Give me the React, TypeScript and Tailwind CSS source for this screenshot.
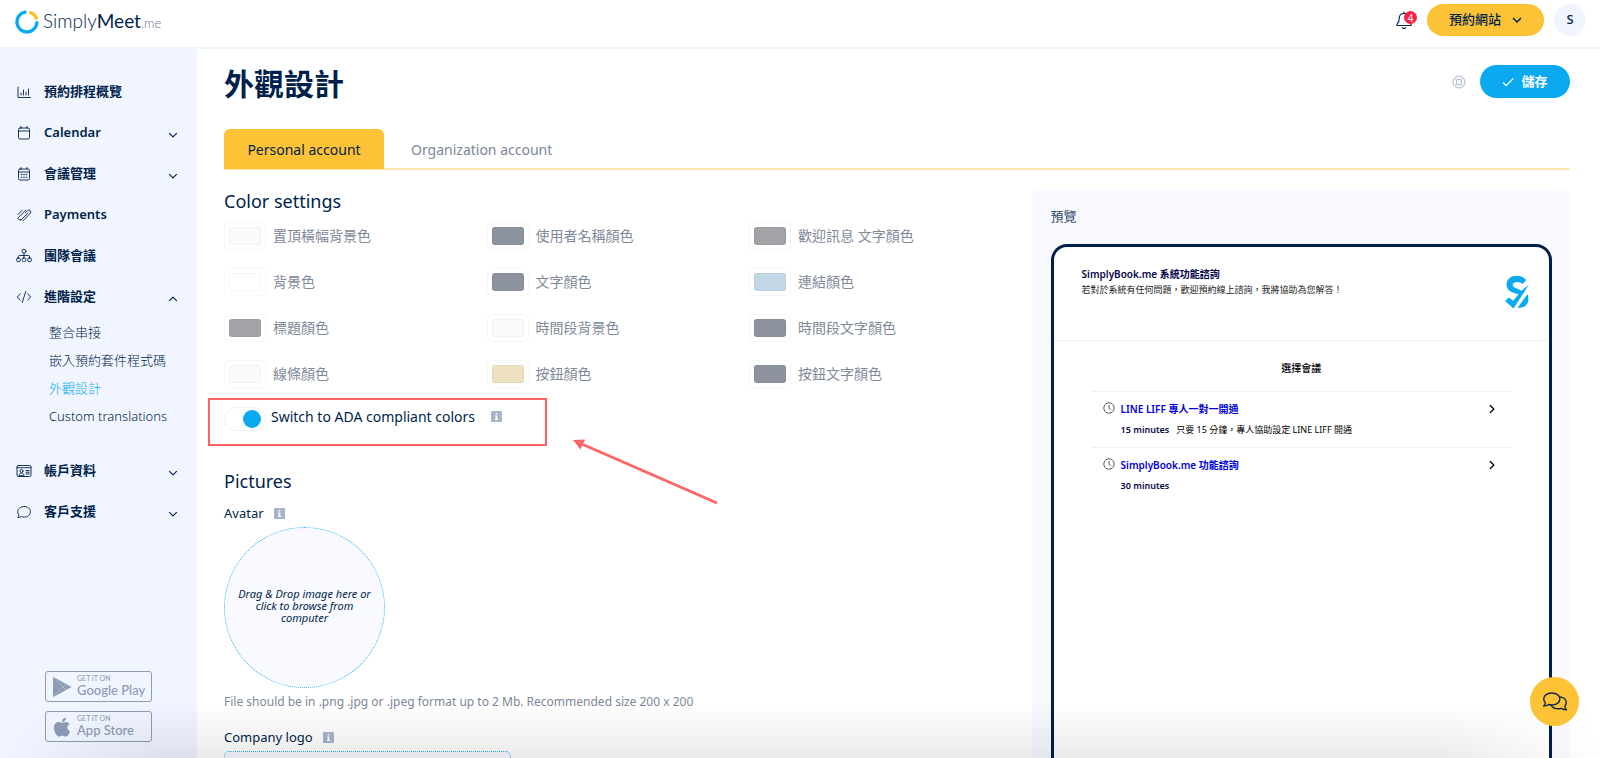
import { useState, type ReactNode } from "react";

type IconName =
  | "chart"
  | "calendar"
  | "calendarDays"
  | "payments"
  | "team"
  | "code"
  | "account"
  | "support";

interface NavItem {
  icon: IconName;
  label: string;
  expandable?: boolean;
  children?: string[];
}

const NAV: NavItem[] = [
  { icon: "chart", label: "預約排程概覽" },
  { icon: "calendar", label: "Calendar", expandable: true },
  { icon: "calendarDays", label: "會議管理", expandable: true },
  { icon: "payments", label: "Payments" },
  { icon: "team", label: "團隊會議" },
  {
    icon: "code",
    label: "進階設定",
    expandable: true,
    children: ["整合串接", "嵌入預約套件程式碼", "外觀設計", "Custom translations"],
  },
  { icon: "account", label: "帳戶資料", expandable: true },
  { icon: "support", label: "客戶支援", expandable: true },
];

const COLORS = [
  { id: "banner-bg", label: "置頂橫幅背景色", value: "#f9fafc" },
  { id: "user-name", label: "使用者名稱顏色", value: "#8c939f" },
  { id: "welcome-text", label: "歡迎訊息 文字顏色", value: "#a2a3a7" },
  { id: "page-bg", label: "背景色", value: "#ffffff" },
  { id: "text", label: "文字顏色", value: "#8c939f" },
  { id: "link", label: "連結顏色", value: "#c1d7e6" },
  { id: "title", label: "標題顏色", value: "#a2a3a7" },
  { id: "slot-bg", label: "時間段背景色", value: "#f9fafc" },
  { id: "slot-text", label: "時間段文字顏色", value: "#8c939f" },
  { id: "line", label: "線條顏色", value: "#f9fafc" },
  { id: "button", label: "按鈕顏色", value: "#eee1c1" },
  { id: "button-text", label: "按鈕文字顏色", value: "#8c939f" },
];

const MEETINGS = [
  {
    name: "LINE LIFF 專人一對一開通",
    duration: "15 minutes",
    note: "只要 15 分鐘，專人協助設定 LINE LIFF 開通",
  },
  { name: "SimplyBook.me 功能諮詢", duration: "30 minutes", note: "" },
];

const ICON_PATHS: Record<IconName, ReactNode> = {
  chart: (
    <>
      <path d="M2 3v10.500h12.500" />
      <path d="M5 11V9M7.500 11V6M10 11V8M12.500 11V5" />
    </>
  ),
  calendar: (
    <>
      <rect x="2.500" y="3" width="11" height="11" rx="1.500" />
      <path d="M2.500 6h11M5 1.500V3M11 1.500V3" />
    </>
  ),
  calendarDays: (
    <>
      <rect x="2.500" y="3" width="11" height="11" rx="1.500" />
      <path d="M2.500 6h11M5 1.500V3M11 1.500V3" />
      <path d="M5.500 8.500h.01M8 8.500h.01M10.500 8.500h.01M5.500 11.200h.01M8 11.200h.01M10.500 11.200h.01" strokeWidth="1.600" />
    </>
  ),
  payments: (
    <path d="M1.800 7.600 6.200 3.200M4.700 13.300 12 5.900M9.900 3 2.600 10.200a1.500 1.500 0 0 0 2.100 2.200M9.300 5.800l2.100-2.100a1.900 1.900 0 0 1 2.800 2.700L6.900 13.800" />
  ),
  team: (
    <>
      <circle cx="8" cy="3.300" r="2" />
      <path d="M8 5.300v4.700M2.300 10V8.800A1.300 1.300 0 0 1 3.600 7.500h8.800a1.300 1.300 0 0 1 1.300 1.300V10" />
      <rect x=".6" y="10" width="3.600" height="3.600" rx="1.200" />
      <rect x="6.200" y="10" width="3.600" height="3.600" rx="1.200" />
      <rect x="11.800" y="10" width="3.600" height="3.600" rx="1.200" />
    </>
  ),
  code: <path d="M4.300 4.800 1.300 8l3 3.200M11.700 4.800l3 3.200-3 3.200M9.700 2.500 6.300 13.500" />,
  account: (
    <>
      <rect x="1" y="2.500" width="14" height="11" rx="1.200" />
      <path d="M1 4.700h14M3 12.300c0-3.100 5-3.100 5 0zM10 7.500h3.200M10 9.200h3.200M10 10.900h3.200" />
      <circle cx="5.500" cy="8" r="1.500" />
    </>
  ),
  support: (
    <path d="M8.200 2.500c3.600 0 6.300 2.400 6.300 5.300s-2.700 5.300-6.300 5.300c-1 0-2-.2-2.900-.6-1 .7-2.200 1-3.600.9.700-.8 1.200-1.600 1.300-2.300C2.100 10.100 1.700 9 1.700 7.800 1.700 4.900 4.600 2.500 8.200 2.500Z" />
  ),
};

function NavIcon({ name }: { name: IconName }) {
  return (
    <svg
      viewBox="0 0 16 16"
      className="size-4 shrink-0"
      fill="none"
      stroke="currentColor"
      strokeWidth=".9"
      strokeLinecap="round"
      strokeLinejoin="round"
    >
      {ICON_PATHS[name]}
    </svg>
  );
}

function Chevron({ className }: { className: string }) {
  return (
    <svg
      viewBox="0 0 10 10"
      className={className}
      fill="none"
      stroke="currentColor"
      strokeWidth="1.200"
      strokeLinecap="round"
      strokeLinejoin="round"
    >
      <path d="m1.500 3.300 3.500 3.500 3.500-3.500" />
    </svg>
  );
}

function InfoIcon() {
  return (
    <svg viewBox="0 0 11 11" className="size-[11px] shrink-0" role="img" aria-label="Info">
      <rect width="11" height="11" rx="1" fill="#a6b5c9" />
      <path d="M4.700 2h1.600v1.500H4.700zM4 4.500h2.300v3.300H7V9H4V7.800h.7V5.600H4z" fill="#fff" />
    </svg>
  );
}

function Header() {
  return (
    <header className="flex h-[49px] shrink-0 items-start justify-between border-b-2 border-[#f1f5ff] bg-white pr-[14px] pl-[15px]">
      <a href="#home" className="flex items-center gap-1 pt-[6px]" aria-label="SimplyMeet.me">
        <svg viewBox="0 0 24 24" className="size-6" fill="none" strokeWidth="3.400" strokeLinecap="round">
          <path d="M21.900 12.800A10 10 0 1 1 10 2.200" stroke="#0baaf0" />
          <path d="M15.600 2.700a10 10 0 0 1 5.800 5.700" stroke="#fdc02f" />
        </svg>
        <span className="font-['Lato'] text-[19px] leading-[30px] font-light text-[#001f4b]">
          Simply<span className="font-normal">Meet</span>
          <span className="text-[13px] text-[#66748c]">.me</span>
        </span>
      </a>

      <div className="flex items-center pt-1">
        <button type="button" aria-label="Notifications" className="relative mr-[13px] size-5">
          <svg
            viewBox="0 0 20 20"
            className="size-5"
            fill="none"
            stroke="#0b2a52"
            strokeWidth="1.200"
            strokeLinecap="round"
            strokeLinejoin="round"
          >
            <path d="M10 2v1.300M10 3.300c-3 0-4.700 2-4.700 4.700 0 3.500-1 4.800-2.300 6.300-.4.600 0 1.200.6 1.200h12.800c.6 0 1-.6.600-1.200C15.700 12.800 14.700 11.500 14.700 8c0-2.700-1.700-4.700-4.700-4.700ZM8.400 17.700c.5 1 2.700 1 3.200 0" />
          </svg>
          <span className="absolute top-px left-[10px] flex size-[13px] items-center justify-center rounded-full bg-[#fb1f43] text-[10px] leading-3 text-white">
            4
          </span>
        </button>
        <button
          type="button"
          className="flex h-8 w-[117px] items-center justify-center gap-[11px] rounded-full bg-[#fdc236] text-[13px] font-medium"
        >
          預約網站
          <svg viewBox="0 0 10 10" className="size-[10px]" fill="none" stroke="currentColor" strokeWidth="1.500">
            <path d="m1 3 4 4 4-4" />
          </svg>
        </button>
        <button
          type="button"
          className="ml-[10px] size-8 rounded-full bg-[#f1f5ff] text-[13px] font-medium"
        >
          S
        </button>
      </div>
    </header>
  );
}

function StoreBadge({ store, children }: { store: string; children: ReactNode }) {
  return (
    <a
      href="#store"
      className="flex h-[31px] w-[107px] items-center gap-[5px] rounded-[3px] border border-[#8d9bb4] pl-[6px] text-[#8d9bb4]"
    >
      {children}
      <span className="flex flex-col pb-[2px] font-['Lato'] whitespace-nowrap">
        <span className="text-[7px] leading-[9px]">GET IT ON</span>
        <span className="text-[13px] leading-[14px] font-medium">{store}</span>
      </span>
    </a>
  );
}

function Sidebar() {
  return (
    <aside className="flex w-[197px] shrink-0 flex-col bg-[#f1f5ff] pt-[22px] pb-4">
      <nav>
        <ul>
          {NAV.map((item) => (
            <li key={item.label}>
              <a href="#nav" className="flex h-[41px] items-center pr-[19px] pl-4 text-[13px] font-semibold">
                <NavIcon name={item.icon} />
                <span className="ml-3 flex-1">{item.label}</span>
                {item.expandable && (
                  <Chevron className={item.children ? "mt-1 size-[10px] rotate-180" : "mt-1 size-[10px]"} />
                )}
              </a>
              {item.children && (
                <ul className="mb-5 pt-px pl-[49px] text-[13px] leading-7 font-light">
                  {item.children.map((child) => (
                    <li key={child}>
                      <a
                        href="#sub"
                        className={child === "外觀設計" ? "text-[#0baaf0]" : "text-[#001f4b]"}
                      >
                        {child}
                      </a>
                    </li>
                  ))}
                </ul>
              )}
            </li>
          ))}
        </ul>
      </nav>

      <div className="mt-auto ml-[45px] flex flex-col gap-[9px]">
        <StoreBadge store="Google Play">
          <svg viewBox="0 0 20 22" className="h-[22px] w-5" fill="currentColor">
            <path d="M1 .8 19.500 11 1 21.200z" />
            <path d="M1 .8 14 14M1 21.200 14 8" stroke="#f1f5ff" strokeWidth=".3" />
          </svg>
        </StoreBadge>
        <StoreBadge store="App Store">
          <svg viewBox="0 0 384 512" className="h-[22px] w-5" fill="currentColor">
            <path d="M318.700 268.700c-.2-36.700 16.400-64.400 50-84.800-18.800-26.900-47.200-41.700-84.700-44.600-35.500-2.800-74.300 20.700-88.500 20.700-15 0-49.400-19.700-76.400-19.700C63.300 141.200 4 184.800 4 273.500q0 39.300 14.400 81.200c12.800 36.700 59 126.700 107.200 125.200 25.200-.6 43-17.900 75.800-17.900 31.800 0 48.300 17.900 76.400 17.900 48.600-.7 90.400-82.500 102.600-119.300-65.200-30.700-61.700-90-61.700-91.900zm-56.600-164.200c27.300-32.400 24.800-61.900 24-72.500-24.100 1.400-52 16.400-67.900 34.900-17.500 19.800-27.800 44.300-25.600 71.900 26.100 2 49.900-11.400 69.500-34.300z" />
          </svg>
        </StoreBadge>
      </div>
    </aside>
  );
}

function ColorSettings() {
  return (
    <section>
      <h2 className="text-[18px] leading-6">Color settings</h2>
      <div className="mt-[9px] grid grid-cols-3 gap-y-[18px]">
        {COLORS.map((color) => (
          <div key={color.id} className="flex h-7 items-center gap-[7px]">
            <input
              id={color.id}
              type="color"
              defaultValue={color.value}
              className="h-7 w-[42px] appearance-none rounded-[5px] border border-[#f6f7f9] bg-white px-1 py-[4px] [&::-webkit-color-swatch]:rounded-[3px] [&::-webkit-color-swatch]:border [&::-webkit-color-swatch]:border-black/4 [&::-webkit-color-swatch-wrapper]:p-0"
            />
            <label htmlFor={color.id} className="text-[14px] leading-5 text-[#808998]">
              {color.label}
            </label>
          </div>
        ))}
      </div>
    </section>
  );
}

function AdaSwitch() {
  const [enabled, setEnabled] = useState(true);

  return (
    <div className="relative mt-[19px] flex h-6 items-center">
      <input
        id="ada"
        type="checkbox"
        role="switch"
        checked={enabled}
        onChange={(e) => setEnabled(e.target.checked)}
        className="h-6 w-[42px] appearance-none rounded-full border border-[#edf1fb] bg-white p-[2px] before:block before:size-[18px] before:rounded-full before:bg-[#a6b5c9] checked:before:ml-4 checked:before:bg-[#0baaf0]"
      />
      <label htmlFor="ada" className="mr-4 ml-[5px] pb-[5px] text-[14px] leading-5">
        Switch to ADA compliant colors
      </label>
      <div className="pb-[5px]">
        <InfoIcon />
      </div>

      {/* Highlight frame and the arrow pointing at it */}
      <div className="pointer-events-none absolute -top-[9px] -left-4 h-12 w-[339px] border-2 border-[#ff6262]" />
      <svg
        viewBox="0 0 146 66"
        className="pointer-events-none absolute top-8 left-[349px] h-[66px] w-[146px]"
      >
        <path d="M10 5.500 144 64" stroke="#ff6666" strokeWidth="3" />
        <path d="m0 1 12-.5-4.500 10z" fill="#ff6262" />
      </svg>
    </div>
  );
}

function Pictures() {
  return (
    <section className="mt-[38px]">
      <h2 className="text-[18px] leading-6">Pictures</h2>
      <div className="mt-[10px] flex items-center gap-[10px]">
        <span className="text-[13px] leading-5">Avatar</span>
        <InfoIcon />
      </div>
      <label className="mt-1 flex size-[161px] cursor-pointer items-center justify-center rounded-full border border-dotted border-[#33b4f1] bg-[#f8faff] px-2 pb-1 text-center text-[11px] leading-3 italic">
        Drag &amp; Drop image here or click to browse from computer
        <input type="file" className="sr-only" />
      </label>
      <p className="mt-1 text-[12px] leading-5 text-[#7c8799]">
        File should be in .png .jpg or .jpeg format up to 2 Mb. Recommended size 200 x 200
      </p>
      <div className="mt-[15px] flex items-center gap-[10px]">
        <span className="text-[13px] leading-5">Company logo</span>
        <InfoIcon />
      </div>
      <label className="mt-1 block h-[161px] w-[287px] cursor-pointer rounded-[5px] border border-dotted border-[#33b4f1] bg-[#f8faff]">
        <input type="file" aria-label="Company logo" className="sr-only" />
      </label>
    </section>
  );
}

function Preview() {
  return (
    <aside className="rounded-t-lg bg-[#f8faff] pt-[17px] pr-[18px] pl-[19px]">
      <h2 className="text-[13px] leading-5 text-[#33496b]">預覽</h2>
      <div className="mt-[18px] h-[700px] rounded-[16px] border-3 border-[#001f4b] bg-white">
        <div className="flex h-[94px] items-start justify-between border-b border-[#f0f1f3] pt-5 pr-5 pl-7">
          <div>
            <h3 className="text-[10px] leading-[15px] font-semibold text-[#06064a]">
              SimplyBook.me 系統功能諮詢
            </h3>
            <p className="text-[9px] leading-[15px] text-[#222]">
              若對於系統有任何問題，歡迎預約線上諮詢，我將協助為您解答！
            </p>
          </div>
          <svg viewBox="0 0 24 34" className="mt-2 h-[34px] w-6" fill="#0baaf0">
            <path d="M21.200 5.300 17.500 9C15.500 6.400 7.700 6 7.700 10c0 3 5.300 3.400 8.800 5.800L24 9.500 8.500 33.500 0 26l3.800-3.600 4.400 3.400 5.300-6.500C8 17.600 1.500 16.500 1.500 9.500 1.500-.5 16.500-2 21.200 5.300Z" />
            <path d="M22.500 19c2.400 6.500.5 14-10 14z" />
          </svg>
        </div>

        <h3 className="pt-5 pb-[15px] text-center text-[10px] leading-[15px] font-medium text-black">
          選擇會議
        </h3>
        <ul className="mx-[38px]">
          {MEETINGS.map((meeting) => (
            <li key={meeting.name} className="flex h-14 border-t border-[#f0f1f3] pt-[9px] pl-[11px]">
              <svg viewBox="0 0 12 12" className="mt-px size-3" fill="none" stroke="#333" strokeWidth=".8">
                <circle cx="6" cy="6" r="5.200" />
                <path d="M6 2.800V6l1.500 1.800" />
              </svg>
              <div className="ml-[6px] flex-1">
                <a href="#meeting" className="block text-[10px] leading-4 font-semibold text-[#0000e0]">
                  {meeting.name}
                </a>
                <p className="mt-[5px] flex gap-[7px] text-[9px] leading-4 text-black">
                  <span className="font-semibold text-[#06064a]">{meeting.duration}</span>
                  <span>{meeting.note}</span>
                </p>
              </div>
              <Chevron className="mt-[3px] mr-[14px] size-[10px] -rotate-90 text-black" />
            </li>
          ))}
        </ul>
      </div>
    </aside>
  );
}

export default function App() {
  const [tab, setTab] = useState("Personal account");

  return (
    <div className="flex h-screen flex-col overflow-hidden bg-white font-['Noto_Sans','Noto_Sans_CJK_TC',sans-serif] text-[#001f4b]">
      <Header />
      <div className="flex min-h-0 flex-1">
        <Sidebar />
        <main className="min-w-0 flex-1 overflow-hidden pt-4 pr-[30px] pl-[27px]">
          <div className="flex h-9 items-start justify-between">
            <h1 className="text-[30px] leading-[38px] font-bold">外觀設計</h1>
            <div className="flex items-center gap-[14px]">
              <button type="button" aria-label="Help" className="text-[#a6b5c9]">
                <svg viewBox="0 0 14 14" className="size-[14px]" fill="none" stroke="currentColor">
                  <circle cx="7" cy="7" r="6" />
                  <circle cx="7" cy="7" r="2.800" />
                  <path d="m3.300 2.300 2.100 2.100M2.300 3.300l2.100 2.100M10.700 2.300 8.600 4.400M11.700 3.300 9.600 5.400M3.300 11.700l2.100-2.100M2.300 10.700l2.100-2.100M10.700 11.700 8.600 9.600M11.700 10.700 9.600 8.600" strokeWidth=".7" />
                </svg>
              </button>
              <button
                type="button"
                className="flex h-[33px] w-[90px] items-center justify-center gap-[7px] rounded-full bg-[#0baaf0] text-[13px] font-semibold text-white"
              >
                <svg viewBox="0 0 12 12" className="size-3" fill="none" stroke="currentColor" strokeWidth="1.200">
                  <path d="m1 6.500 3.200 3.200L11.300 2.300" />
                </svg>
                儲存
              </button>
            </div>
          </div>

          <div className="mt-7 flex h-[41px] border-b-2 border-[#fee5ac]" role="tablist">
            {["Personal account", "Organization account"].map((name) => (
              <button
                key={name}
                type="button"
                role="tab"
                aria-selected={tab === name}
                onClick={() => setTab(name)}
                className={
                  tab === name
                    ? "h-10 w-40 rounded-t-[6px] bg-[#fdc236] text-[14px]"
                    : "h-10 px-[27px] text-[14px] text-[#7c8799]"
                }
              >
                {name}
              </button>
            ))}
          </div>

          <div className="mt-[19px] grid grid-cols-[minmax(0,1fr)_40%] gap-5">
            <div>
              <ColorSettings />
              <AdaSwitch />
              <Pictures />
            </div>
            <Preview />
          </div>
        </main>
      </div>

      {/* Fade along the bottom edge of the window */}
      <div className="pointer-events-none fixed inset-x-0 bottom-0 h-14 bg-linear-to-b from-black/0 to-black/8 mask-x-from-90% mask-x-to-100%" />

      <button
        type="button"
        aria-label="Chat"
        className="fixed right-[21px] bottom-8 flex size-[49px] items-center justify-center rounded-full bg-[#fdc236]"
      >
        <svg
          viewBox="0 0 26 22"
          className="h-[22px] w-[26px]"
          fill="none"
          stroke="#0b2a52"
          strokeWidth="1.400"
          strokeLinecap="round"
          strokeLinejoin="round"
        >
          <path d="M9.800 2c4.500 0 8.100 2.500 8.100 6s-3.600 6-8.100 6c-1.100 0-2.200-.2-3.200-.5-1.300.9-3 1.600-5 1.600 1-1.100 1.700-2.300 1.700-3.500C2.200 10.600 1.700 9.400 1.700 8c0-3.500 3.600-6 8.100-6Z" />
          <path d="M18.300 6c3.300.4 6 2.600 6 5.700 0 1.300-.5 2.500-1.500 3.500 0 1.300.6 2.500 1.700 3.700-2 0-3.800-.7-5.100-1.600-1 .3-2 .5-3.200.5-3 0-5.600-1.300-6.900-3.500" />
        </svg>
      </button>
    </div>
  );
}
